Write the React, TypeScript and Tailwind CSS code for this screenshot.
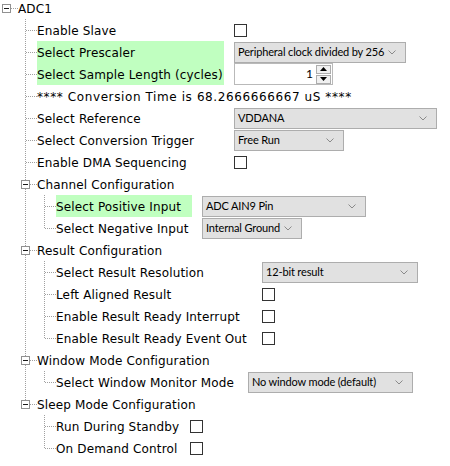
import type { ReactNode } from 'react';

const DOT = '#a0a0a0';

const Pipe = () => (
  <svg width="19" height="22" className="shrink-0">
    <line x1="7.5" y1="0" x2="7.5" y2="22" stroke={DOT} strokeDasharray="1 1" />
  </svg>
);

const Blank = ({ w = 19 }: { w?: number }) => <div style={{ width: w }} className="shrink-0" />;

// tree connector: leaf elbow or an open (minus) expander
const Connector = ({ open, last, root }: { open?: boolean; last?: boolean; root?: boolean }) => {
  if (root) {
    return (
      <svg width="18" height="22" className="shrink-0">
        <line x1="11" y1="11.5" x2="18" y2="11.5" stroke={DOT} strokeDasharray="1 1" />
        <rect x="2.5" y="7.5" width="8" height="8" fill="white" stroke="#919191" />
        <line x1="4" y1="11.5" x2="9" y2="11.5" stroke="#1a1a1a" />
      </svg>
    );
  }
  return (
    <svg width="19" height="22" className="shrink-0">
      {open ? (
        <>
          <line x1="7.5" y1="0" x2="7.5" y2="7" stroke={DOT} strokeDasharray="1 1" />
          {!last && <line x1="7.5" y1="16" x2="7.5" y2="22" stroke={DOT} strokeDasharray="1 1" />}
          <line x1="12" y1="11.5" x2="19" y2="11.5" stroke={DOT} strokeDasharray="1 1" />
          <rect x="3.5" y="7.5" width="8" height="8" fill="white" stroke="#919191" />
          <line x1="5" y1="11.5" x2="10" y2="11.5" stroke="#1a1a1a" />
        </>
      ) : (
        <>
          <line x1="7.5" y1="0" x2="7.5" y2={last ? 12 : 22} stroke={DOT} strokeDasharray="1 1" />
          <line x1="8" y1="11.5" x2="19" y2="11.5" stroke={DOT} strokeDasharray="1 1" />
        </>
      )}
    </svg>
  );
};

const Chevron = () => (
  <svg width="8" height="5" className="shrink-0">
    <polyline points="0.5,0.5 4,4 7.5,0.5" fill="none" stroke="#8a8a8a" strokeWidth="1" />
  </svg>
);

const Select = ({ value, w }: { value: string; w: number }) => (
  <div
    style={{ width: w }}
    className="flex h-[21px] items-center justify-between border border-[#adadad] bg-[#e1e1e1] pl-[3px] pr-[9px] font-['Lato',sans-serif] text-[11px] tracking-[-0.15px] text-black"
  >
    <span className="whitespace-nowrap">{value}</span>
    <Chevron />
  </div>
);

const Check = () => <div className="h-[13px] w-[13px] border border-[#333333] bg-white" />;

const Spinner = () => (
  <div className="flex h-[22px] w-[99px] items-center border border-[#b9b9b9] bg-white font-['Lato',sans-serif] text-[12px] tracking-normal">
    <span className="flex-1 pr-[3px] text-right">1</span>
    <div className="mr-[1px] flex h-[19px] w-[15px] flex-col gap-[1px]">
      <div className="flex flex-1 items-center justify-center border border-[#adadad] bg-[#f0f0f0]">
        <svg width="7" height="4"><polygon points="0,4 3.5,0 7,4" fill="#000" /></svg>
      </div>
      <div className="flex flex-1 items-center justify-center border border-[#adadad] bg-[#f0f0f0]">
        <svg width="7" height="4"><polygon points="0,0 3.5,4 7,0" fill="#000" /></svg>
      </div>
    </div>
  </div>
);

type RowProps = {
  guides?: ('pipe' | 'blank')[];
  open?: boolean;
  last?: boolean;
  label: string;
  lw?: number;
  hl?: boolean;
  wide?: boolean;
  children?: ReactNode;
};

const Row = ({ guides = [], open, last, label, lw, hl, wide, children }: RowProps) => (
  <div className="flex h-[22px] items-center">
    <Blank w={18} />
    {guides.map((g, i) => (g === 'pipe' ? <Pipe key={i} /> : <Blank key={i} />))}
    <Connector open={open} last={last} />
    <div
      style={lw ? { width: lw } : undefined}
      className={`flex h-full shrink-0 items-center whitespace-nowrap pt-[2px] ${hl ? 'bg-[#c0ffc0]' : ''} ${
        wide ? 'tracking-[0.6px]' : ''
      }`}
    >
      {label}
    </div>
    {children && <div className="ml-[10px] flex items-center">{children}</div>}
  </div>
);

export default function App() {
  return (
    <div className="h-[466px] w-[450px] overflow-hidden bg-white font-['DejaVu_Sans',sans-serif] text-[12px] tracking-[0.15px] text-black">
      <div className="-mt-[3px]">
        <div className="flex h-[22px] items-center">
          <Connector root />
          <span className="pt-[2px]">ADC1</span>
        </div>

        <Row label="Enable Slave" lw={187}>
          <Check />
        </Row>
        <Row label="Select Prescaler" lw={187} hl>
          <Select value="Peripheral clock divided by 256" w={172} />
        </Row>
        <Row label="Select Sample Length (cycles)" lw={187} hl>
          <Spinner />
        </Row>
        <Row label="**** Conversion Time is 68.2666666667 uS ****" wide />
        <Row label="Select Reference" lw={187}>
          <Select value="VDDANA" w={203} />
        </Row>
        <Row label="Select Conversion Trigger" lw={187}>
          <Select value="Free Run" w={110} />
        </Row>
        <Row label="Enable DMA Sequencing" lw={187}>
          <Check />
        </Row>

        <Row label="Channel Configuration" open />
        <Row guides={['pipe']} label="Select Positive Input" lw={136} hl>
          <Select value="ADC AIN9 Pin" w={164} />
        </Row>
        <Row guides={['pipe']} last label="Select Negative Input" lw={136}>
          <Select value="Internal Ground" w={100} />
        </Row>

        <Row label="Result Configuration" open />
        <Row guides={['pipe']} label="Select Result Resolution" lw={196}>
          <Select value="12-bit result" w={156} />
        </Row>
        <Row guides={['pipe']} label="Left Aligned Result" lw={196}>
          <Check />
        </Row>
        <Row guides={['pipe']} label="Enable Result Ready Interrupt" lw={196}>
          <Check />
        </Row>
        <Row guides={['pipe']} last label="Enable Result Ready Event Out" lw={196}>
          <Check />
        </Row>

        <Row label="Window Mode Configuration" open />
        <Row guides={['pipe']} last label="Select Window Monitor Mode" lw={182}>
          <Select value="No window mode (default)" w={165} />
        </Row>

        <Row label="Sleep Mode Configuration" open last />
        <Row guides={['blank']} label="Run During Standby" lw={124}>
          <Check />
        </Row>
        <Row guides={['blank']} last label="On Demand Control" lw={124}>
          <Check />
        </Row>
      </div>
    </div>
  );
}
